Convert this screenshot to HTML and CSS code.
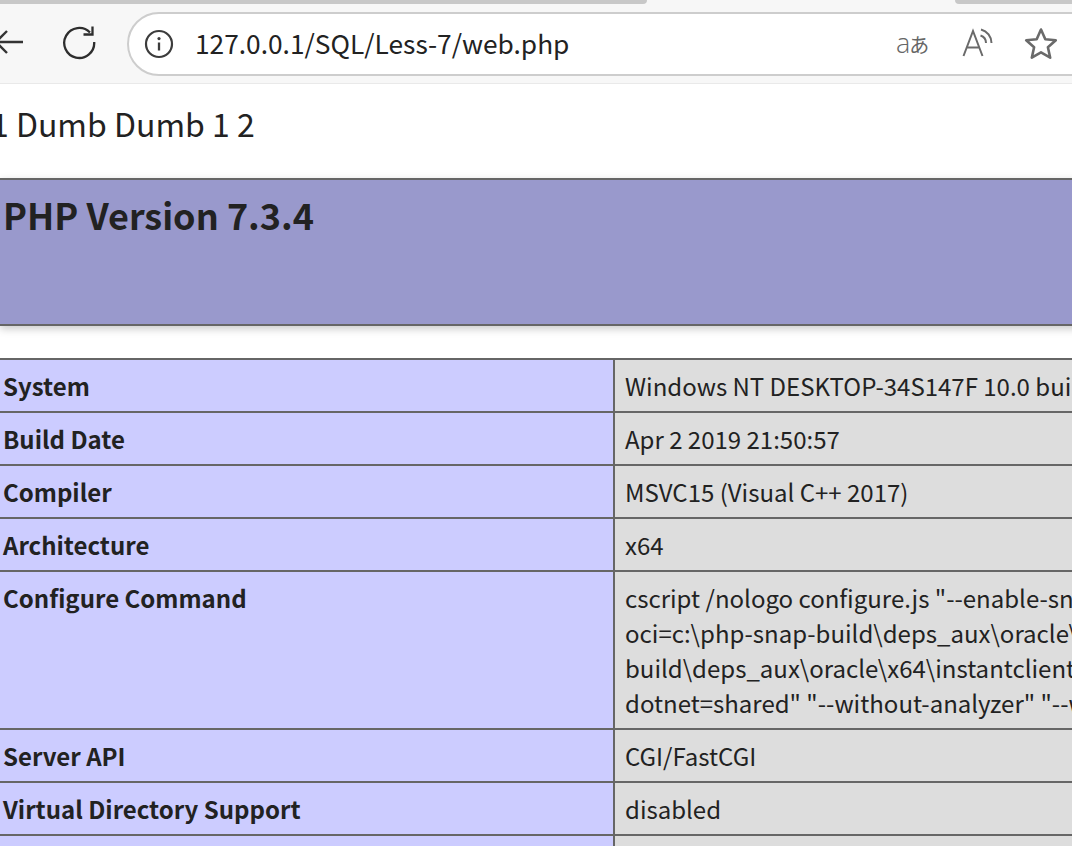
FILE: index.html
```html
<!DOCTYPE html>
<html lang="en">
<head>
<meta charset="utf-8">
<title>phpinfo()</title>
<link rel="stylesheet" href="styles.css">
</head>
<body>
<div class="tabstrip"><div class="tab-left"></div><div class="tab-right"></div></div>
<header class="toolbar">
  <svg class="ico-back" width="26" height="34" viewBox="0 0 26 34"><path d="M23 17H-2M7 6L-4 17L7 28" fill="none" stroke="#333" stroke-width="2.4"/></svg>
  <svg class="ico-reload" width="36" height="36" viewBox="0 0 36 36"><path d="M29 8.5A15 15 0 1 0 33.2 18" fill="none" stroke="#2e2e2e" stroke-width="2.3"/><path d="M31.5 2.5V10.5H22.5" fill="none" stroke="#2e2e2e" stroke-width="2.3"/></svg>
  <div class="omnibox">
    <svg class="ico-info" width="30" height="30" viewBox="0 0 30 30"><circle cx="15" cy="15" r="13" fill="none" stroke="#3c3c3c" stroke-width="2.2"/><circle cx="15" cy="9.6" r="1.6" fill="#3c3c3c"/><path d="M15 13.5V21.5" stroke="#3c3c3c" stroke-width="2.3"/></svg>
    <span class="url">127.0.0.1/SQL/Less-7/web.php</span>
    <span class="translate"><span class="tr-a">a</span><span class="tr-b">あ</span></span>
    <svg class="ico-read" width="32" height="30" viewBox="0 0 32 30"><path d="M1.500 28L11 3L20.500 28M5 19.500H17" fill="none" stroke="#6a6a6a" stroke-width="2"/><path d="M19 1.500A14 14 0 0 1 29.500 15M18.500 7.500A8 8 0 0 1 24 15" fill="none" stroke="#6a6a6a" stroke-width="2"/></svg>
    <svg class="ico-star" width="34" height="34" viewBox="0 0 34 34"><path d="M17 2.500L21.300 12.200L31.800 13.300L23.900 20.300L26.200 30.700L17 25.400L7.800 30.700L10.100 20.300L2.200 13.300L12.700 12.200Z" fill="none" stroke="#6a6a6a" stroke-width="2.600" stroke-linejoin="round"/></svg>
  </div>
</header>
<main class="page">
  <p class="result">1 Dumb Dumb 1 2</p>
  <div class="banner"><h1>PHP Version 7.3.4</h1></div>
  <table class="info">
    <colgroup><col class="col-key"><col class="col-val"></colgroup>
    <tbody>
      <tr><th>System</th><td>Windows NT DESKTOP-34S147F 10.0 build 19045 (Windows 10) AMD64</td></tr>
      <tr><th>Build Date</th><td>Apr 2 2019 21:50:57</td></tr>
      <tr><th>Compiler</th><td>MSVC15 (Visual C++ 2017)</td></tr>
      <tr><th>Architecture</th><td>x64</td></tr>
      <tr><th>Configure Command</th><td>cscript /nologo configure.js "--enable-snapshot-build"<br>oci=c:\php-snap-build\deps_aux\oracle\x64\instantclient<br>build\deps_aux\oracle\x64\instantclient_12_1\sdk,shared"<br>dotnet=shared" "--without-analyzer" "--with-pgo"</td></tr>
      <tr><th>Server API</th><td>CGI/FastCGI</td></tr>
      <tr><th>Virtual Directory Support</th><td>disabled</td></tr>
      <tr><th>Configuration File</th><td>C:\Windows</td></tr>
    </tbody>
  </table>
</main>
</body>
</html>
```
FILE: styles.css
```css
html, body {
  margin: 0;
  padding: 0;
  width: 1072px;
  height: 846px;
  overflow: hidden;
  background: #fff;
  color: #222;
  font-family: "Noto Sans CJK SC", "Noto Sans", sans-serif;
}
.tabstrip {
  height: 4px;
  background: #f7f7f7;
  display: flex;
}
.tab-left {
  width: 648px;
  height: 4px;
  background: #c8c8c8;
  border-bottom-right-radius: 8px;
}
.tab-right {
  width: 117px;
  height: 4px;
  margin-left: 308px;
  background: #c8c8c8;
  border-bottom-left-radius: 8px;
}
.toolbar {
  height: 80px;
  box-sizing: border-box;
  background: #f7f7f7;
  border-bottom: 1px solid #e9e9e9;
  display: flex;
  align-items: center;
  overflow: hidden;
}
.ico-back { flex: none; margin-top: -3px; }
.ico-reload { flex: none; margin: -3px 0 0 35px; }
.omnibox {
  flex: none;
  width: 1000px;
  height: 64px;
  margin: 1px 0 0 30px;
  box-sizing: border-box;
  border: 2px solid #cdcdcd;
  border-radius: 32px;
  background: #fff;
  display: flex;
  align-items: center;
  padding-left: 15px;
  color: #222;
}
.ico-info { flex: none; }
.url {
  margin: -2px 0 0 21px;
  font-size: 26.3px;
  line-height: 36px;
  white-space: nowrap;
  width: 650px;
  flex: none;
}
.translate {
  flex: none;
  width: 60px;
  margin-left: 51px;
  color: #666;
  white-space: nowrap;
  font-size: 22px;
  line-height: 30px;
}
.tr-a {
  font-family: "Open Sans", sans-serif;
  font-size: 27px;
  font-weight: 300;
}
.tr-b { font-size: 20px; margin-left: -1px; }
.ico-read { flex: none; margin-left: 6px; margin-top: -2px; }
.ico-star { flex: none; margin-left: 30px; }
.page {
  margin-left: -3px;
  width: 1400px;
}
.result {
  margin: 0 0 0 -6px;
  padding: 17px 0 33px;
  font-size: 32px;
  line-height: 44px;
  height: 44px;
  white-space: nowrap;
}
.banner {
  height: 144px;
  margin-bottom: 32px;
  border: solid #666;
  border-width: 2px 0;
  background: #9999cc;
  box-shadow: 3px 3px 8px #ccc;
}
.banner h1 {
  margin: 0;
  padding: 9px 0 0 6px;
  font-size: 36px;
  line-height: 50px;
  font-weight: 700;
}
.info {
  border-collapse: collapse;
  table-layout: fixed;
  width: 1400px;
  font-size: 24px;
  line-height: 35px;
}
.col-key { width: 616px; }
.info th, .info td {
  border: 2px solid #666;
  padding: 8px 4px;
  text-align: left;
  vertical-align: top;
  white-space: nowrap;
  overflow: hidden;
}
.info th { background: #ccccff; font-weight: 700; }
.info td { background: #ddd; padding-left: 10px; }
```
